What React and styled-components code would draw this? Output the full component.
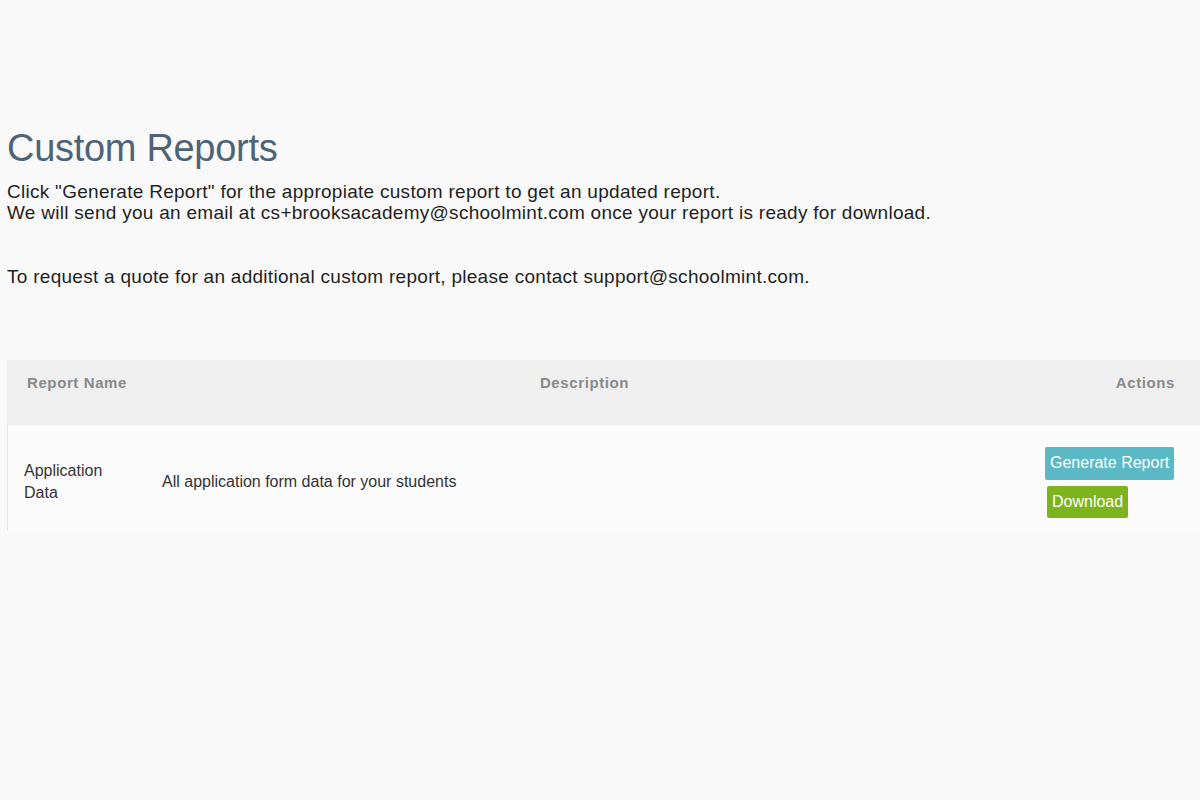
import React from 'react';
import styled, { createGlobalStyle } from 'styled-components';

const GlobalStyle = createGlobalStyle`
  html, body {
    margin: 0;
    background: #f9f9f9;
    font-family: "Liberation Sans", Arial, sans-serif;
    color: #222;
  }
`;

const reports = [
  {
    name: 'Application Data',
    description: 'All application form data for your students',
  },
];

const App = () => {
  return (
    <>
      <GlobalStyle />
      <Page>
        <Title>Custom Reports</Title>
        <Intro>
          Click "Generate Report" for the appropiate custom report to get an updated report.
          <br />
          We will send you an email at cs+brooksacademy@schoolmint.com once your report is ready for download.
        </Intro>
        <Intro>
          To request a quote for an additional custom report, please contact support@schoolmint.com.
        </Intro>
        <Table>
          <HeadRow>
            <HeadCell>Report Name</HeadCell>
            <HeadCell align="center">Description</HeadCell>
            <HeadCell align="right">Actions</HeadCell>
          </HeadRow>
          {reports.map((r) => (
            <BodyRow key={r.name}>
              <NameCell>{r.name}</NameCell>
              <DescCell>{r.description}</DescCell>
              <ActionCell>
                <Button color="#5bb9c5">Generate Report</Button>
                <Button color="#7db41e" offset>Download</Button>
              </ActionCell>
            </BodyRow>
          ))}
        </Table>
      </Page>
    </>
  );
};

export default App;

const Page = styled.div`
  padding: 126px 0 0 7px;
  min-height: 800px;
  box-sizing: border-box;
`;

const Title = styled.h1`
  font-size: 38px;
  font-weight: 300;
  color: #4f6377;
  margin: 0 0 11px;
  line-height: 44px;
  letter-spacing: -0.3px;
`;

const Intro = styled.p`
  font-size: 19px;
  line-height: 21px;
  letter-spacing: 0.28px;
  margin: 0 0 43px;
  color: #1f1f1f;
`;

const Table = styled.div`
  margin-top: 73px;
`;

const Columns = styled.div`
  display: grid;
  grid-template-columns: 134px 1fr 167px;
`;

const HeadRow = styled(Columns)`
  background: #efefef;
  height: 65px;
  align-items: start;
`;

const HeadCell = styled.div`
  font-size: 15px;
  font-weight: bold;
  color: #898989;
  white-space: nowrap;
  letter-spacing: 0.6px;
  padding: 14px 25px 0 20px;
  text-align: ${(p) => p.align || 'left'};
`;

const BodyRow = styled(Columns)`
  background: #fbfbfb;
  height: 106px;
  box-sizing: border-box;
  padding-top: 8px;
  align-items: center;
  border-left: 1px solid #e6e6e6;
`;

const NameCell = styled.div`
  font-size: 16px;
  line-height: 22px;
  color: #333;
  padding: 0 16px;
`;

const DescCell = styled.div`
  font-size: 16px;
  color: #333;
  padding-left: 20px;
`;

const ActionCell = styled.div`
  display: flex;
  flex-direction: column;
  align-items: flex-start;
  gap: 6px;
  padding-left: 12px;
`;

const Button = styled.button`
  background: ${(p) => p.color};
  color: #fff;
  border: none;
  border-radius: 2px;
  font-family: "Liberation Sans", Arial, sans-serif;
  font-size: 16px;
  padding: 0 5px;
  height: ${(p) => (p.offset ? '32px' : '33px')};
  margin-left: ${(p) => (p.offset ? '2px' : '0')};
  cursor: pointer;
`;
